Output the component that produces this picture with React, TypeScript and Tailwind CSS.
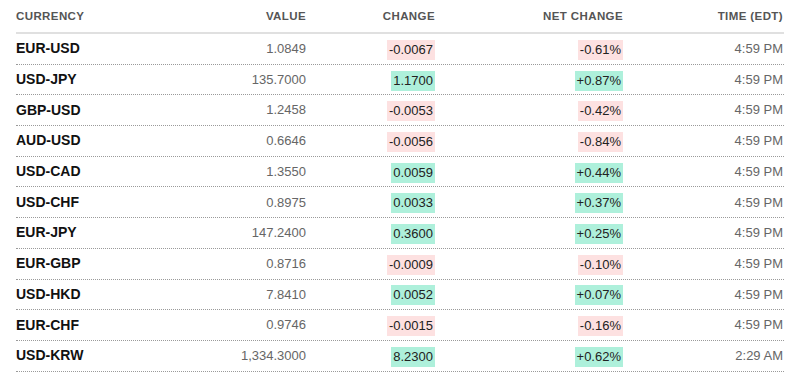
import React from "react";

type Row = { pair: string; value: string; change: string; net: string; time: string; up: boolean };

const rows: Row[] = [
  { pair: "EUR-USD", value: "1.0849", change: "-0.0067", net: "-0.61%", time: "4:59 PM", up: false },
  { pair: "USD-JPY", value: "135.7000", change: "1.1700", net: "+0.87%", time: "4:59 PM", up: true },
  { pair: "GBP-USD", value: "1.2458", change: "-0.0053", net: "-0.42%", time: "4:59 PM", up: false },
  { pair: "AUD-USD", value: "0.6646", change: "-0.0056", net: "-0.84%", time: "4:59 PM", up: false },
  { pair: "USD-CAD", value: "1.3550", change: "0.0059", net: "+0.44%", time: "4:59 PM", up: true },
  { pair: "USD-CHF", value: "0.8975", change: "0.0033", net: "+0.37%", time: "4:59 PM", up: true },
  { pair: "EUR-JPY", value: "147.2400", change: "0.3600", net: "+0.25%", time: "4:59 PM", up: true },
  { pair: "EUR-GBP", value: "0.8716", change: "-0.0009", net: "-0.10%", time: "4:59 PM", up: false },
  { pair: "USD-HKD", value: "7.8410", change: "0.0052", net: "+0.07%", time: "4:59 PM", up: true },
  { pair: "EUR-CHF", value: "0.9746", change: "-0.0015", net: "-0.16%", time: "4:59 PM", up: false },
  { pair: "USD-KRW", value: "1,334.3000", change: "8.2300", net: "+0.62%", time: "2:29 AM", up: true },
];

const cols = "grid grid-cols-[150px_140px_129px_188px_160px]";

function Badge({ text, up }: { text: string; up: boolean }) {
  return (
    <span
      className={
        "inline-block px-[2px] leading-[20px] text-[13px] text-[#222] " +
        (up ? "bg-[#aef0db]" : "bg-[#fde1e1]")
      }
    >
      {text}
    </span>
  );
}

export default function App() {
  return (
    <div className="w-[800px] h-[380px] bg-white px-4" style={{ fontFamily: '"Liberation Sans", Arial, sans-serif' }}>
      <div className={cols + " h-[34px] items-center border-b-2 border-[#e0e0e0] text-[11.5px] font-bold uppercase tracking-[0.4px] text-[#555] pt-[2px]"}>
        <div>Currency</div>
        <div className="text-right">Value</div>
        <div className="text-right">Change</div>
        <div className="text-right">Net Change</div>
        <div className="text-right">Time (EDT)</div>
      </div>
      {rows.map((r) => (
        <div key={r.pair} className={cols + " h-[30.7px] items-center border-b border-dotted border-[#9a9a9a]"}>
          <div className="text-[14px] font-bold text-[#111]">{r.pair}</div>
          <div className="text-right text-[13px] text-[#666]">{r.value}</div>
          <div className="text-right">
            <Badge text={r.change} up={r.up} />
          </div>
          <div className="text-right">
            <Badge text={r.net} up={r.up} />
          </div>
          <div className="text-right text-[13px] text-[#666]">{r.time}</div>
        </div>
      ))}
    </div>
  );
}
